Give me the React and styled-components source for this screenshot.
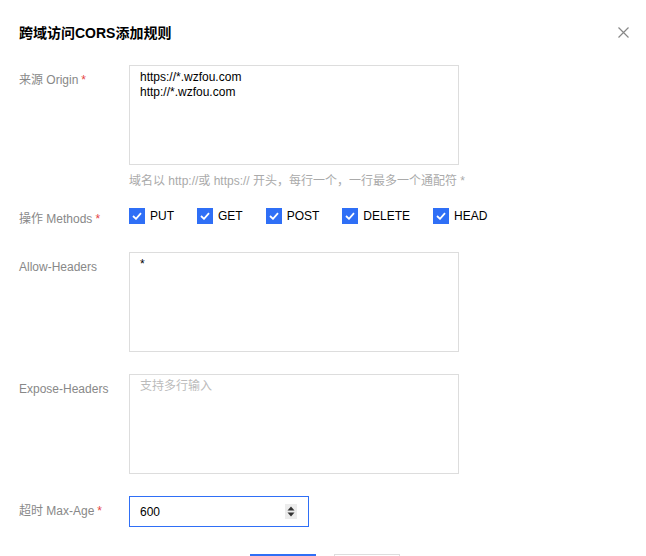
import React from "react";
import styled, { createGlobalStyle } from "styled-components";

const GlobalStyle = createGlobalStyle`
  html, body {
    margin: 0;
    padding: 0;
    background: #fff;
  }
  body {
    font-family: "Liberation Sans", Arial, "Noto Sans CJK SC", sans-serif;
    font-size: 12px;
    color: #000;
  }
`;

const Dialog = styled.div`
  width: 646px;
  height: 556px;
  overflow: hidden;
  box-sizing: border-box;
  padding: 20px 17px 0 19px;
`;

const Header = styled.div`
  display: flex;
  align-items: center;
  justify-content: space-between;
  height: 24px;
  h1 {
    margin: 0;
    font-size: 14px;
    font-weight: 700;
    color: #000;
  }
`;

const Close = styled.button`
  width: 11px;
  height: 11px;
  padding: 0;
  border: 0;
  background: none;
  display: flex;
  align-items: center;
  justify-content: center;
  cursor: pointer;
`;

const Form = styled.div`
  margin-top: 21px;
  display: flex;
  flex-direction: column;
`;

const Row = styled.div`
  display: flex;
  align-items: flex-start;
  margin-top: ${(p) => p.$gap || 0}px;
`;

const Label = styled.div`
  width: 110px;
  flex: none;
  line-height: 30px;
  color: #888;
  white-space: nowrap;
  span {
    color: #e54545;
    margin-left: 3px;
  }
`;

const Control = styled.div`
  display: flex;
  flex-direction: column;
`;

const Area = styled.textarea`
  width: 330px;
  height: 100px;
  box-sizing: border-box;
  border: 1px solid #ddd;
  border-radius: 0;
  padding: 4px 10px;
  margin: 0;
  resize: none;
  outline: none;
  font-family: inherit;
  font-size: 12px;
  line-height: 15px;
  color: #000;
  &::placeholder {
    color: #bbb;
  }
`;

const Help = styled.div`
  margin-top: 7px;
  line-height: 18px;
  color: #aaa;
  white-space: nowrap;
`;

const Checks = styled.div`
  display: flex;
  align-items: center;
  height: 24px;
`;

const Check = styled.label`
  display: flex;
  align-items: center;
  margin-right: 23px;
  color: #000;
  line-height: 18px;
`;

const Box = styled.span`
  width: 16px;
  height: 16px;
  margin-right: 5px;
  background: #2f6ff6;
  display: flex;
  align-items: center;
  justify-content: center;
`;

const NumberBox = styled.div`
  width: 180px;
  height: 31px;
  box-sizing: border-box;
  border: 1px solid #2f6ff6;
  display: flex;
  align-items: center;
  padding: 0 11px 0 10px;
  input {
    flex: 1;
    min-width: 0;
    border: 0;
    outline: none;
    padding: 0;
    font-family: inherit;
    font-size: 12px;
    color: #000;
    background: transparent;
  }
`;

const Spinner = styled.span`
  width: 12px;
  height: 15px;
  background: #ececec;
  display: flex;
  align-items: center;
  justify-content: center;
`;

const Footer = styled.div`
  display: flex;
  justify-content: center;
  gap: 18px;
  margin-top: 27px;
  padding-left: 2px;
`;

const Button = styled.button`
  width: 66px;
  height: 30px;
  box-sizing: border-box;
  border: 1px solid ${(p) => (p.$primary ? "#2f6ff6" : "#ddd")};
  background: ${(p) => (p.$primary ? "#2f6ff6" : "#fff")};
  color: ${(p) => (p.$primary ? "#fff" : "#000")};
  font-family: inherit;
  font-size: 12px;
  padding: 0;
`;

const methods = ["PUT", "GET", "POST", "DELETE", "HEAD"];

function Tick() {
  return (
    <svg width="10" height="8" viewBox="0 0 10 8">
      <path d="M1 4 L4 6.8 L9 1.2" fill="none" stroke="#fff" strokeWidth="1.8" />
    </svg>
  );
}

export default function App() {
  return (
    <Dialog>
      <GlobalStyle />
      <Header>
        <h1>跨域访问CORS添加规则</h1>
        <Close aria-label="close">
          <svg width="11" height="11" viewBox="0 0 11 11">
            <path d="M0.5 0.5 L10.5 10.5 M10.5 0.5 L0.5 10.5" stroke="#888" strokeWidth="1.2" />
          </svg>
        </Close>
      </Header>

      <Form>
        <Row>
          <Label>
            来源 Origin<span>*</span>
          </Label>
          <Control>
            <Area defaultValue={"https://*.wzfou.com\nhttp://*.wzfou.com"} />
            <Help>域名以 http://或 https:// 开头，每行一个，一行最多一个通配符 *</Help>
          </Control>
        </Row>

        <Row $gap={14}>
          <Label>
            操作 Methods<span>*</span>
          </Label>
          <Checks>
            {methods.map((m) => (
              <Check key={m}>
                <Box>
                  <Tick />
                </Box>
                {m}
              </Check>
            ))}
          </Checks>
        </Row>

        <Row $gap={18}>
          <Label>Allow-Headers</Label>
          <Area defaultValue="*" />
        </Row>

        <Row $gap={22}>
          <Label>Expose-Headers</Label>
          <Area placeholder="支持多行输入" />
        </Row>

        <Row $gap={22}>
          <Label>
            超时 Max-Age<span>*</span>
          </Label>
          <NumberBox>
            <input defaultValue="600" />
            <Spinner>
              <svg width="8" height="11" viewBox="0 0 8 11">
                <path d="M4 0.5 L7.5 4.5 L0.5 4.5 Z M4 10.5 L7.5 6.5 L0.5 6.5 Z" fill="#333" />
              </svg>
            </Spinner>
          </NumberBox>
        </Row>
      </Form>

      <Footer>
        <Button $primary>确定</Button>
        <Button>取消</Button>
      </Footer>
    </Dialog>
  );
}
